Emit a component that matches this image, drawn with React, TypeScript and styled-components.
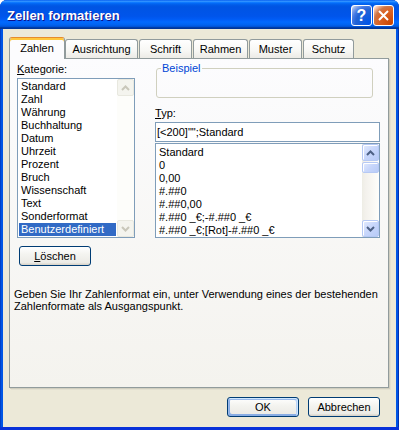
import React from "react";
import styled, { createGlobalStyle } from "styled-components";

const GlobalStyle = createGlobalStyle`
  html, body {
    margin: 0;
    padding: 0;
    background: #ffffff;
  }
  body {
    font-family: "Liberation Sans", Arial, sans-serif;
    font-size: 11px;
    color: #000000;
  }
  * {
    box-sizing: border-box;
  }
`;

const Window = styled.div`
  width: 399px;
  height: 430px;
  display: flex;
  flex-direction: column;
  background: #0055e5;
  border-radius: 7px 7px 0 0;
  overflow: hidden;
  box-shadow: inset 0 -3px #0831d9, inset 1px 0 #0040c8, inset -1px 0 #0030b0;
`;

const TitleBar = styled.div`
  height: 29px;
  flex: none;
  display: flex;
  align-items: flex-start;
  padding: 5px 5px 0 7px;
  background: linear-gradient(
    180deg,
    #0058ee 0%,
    #3593ff 4%,
    #288eff 6%,
    #127dff 8%,
    #036ffc 10%,
    #0262ee 14%,
    #0057e5 20%,
    #0054e3 24%,
    #0055eb 56%,
    #005bf5 66%,
    #026afe 76%,
    #0062ef 86%,
    #0052d6 92%,
    #0040ab 94%,
    #003092 100%
  );
`;

const Title = styled.div`
  flex: 1;
  color: #ffffff;
  font: bold 13px "Liberation Sans", Arial, sans-serif;
  letter-spacing: 0;
  line-height: 21px;
  text-shadow: 1px 1px #0f1089;
`;

const TitleButton = styled.div<{ $close?: boolean }>`
  width: 21px;
  height: 21px;
  margin-left: 1px;
  border: 1px solid #ffffff;
  border-radius: 3px;
  display: flex;
  align-items: center;
  justify-content: center;
  color: #ffffff;
  font: bold 16px "Liberation Sans", Arial, sans-serif;
  background: ${(p) =>
    p.$close
      ? "radial-gradient(circle at 90% 90%, #cc4600 0%, #dc6527 55%, #cd7546 70%, #ffccb2 90%, #ffffff 100%)"
      : "radial-gradient(circle at 90% 90%, #0054e9 0%, #2263d5 55%, #4479e4 70%, #a3bbec 90%, #ffffff 100%)"};
`;

const Body = styled.div`
  flex: 1;
  margin: 0 3px 3px;
  background: #ece9d8;
  display: flex;
  flex-direction: column;
  padding: 8px 7px 0 6px;
`;

const TabStrip = styled.div`
  height: 21px;
  flex: none;
  display: flex;
  align-items: flex-end;
  position: relative;
  z-index: 1;
`;

const Tab = styled.div<{ $active?: boolean; $w: number }>`
  width: ${(p) => p.$w}px;
  height: ${(p) => (p.$active ? 22 : 19)}px;
  margin-bottom: ${(p) => (p.$active ? -1 : 0)}px;
  margin-right: ${(p) => (p.$active ? 0 : 1)}px;
  padding-top: ${(p) => (p.$active ? 4 : 3)}px;
  border: 1px solid #919b9c;
  border-bottom: none;
  border-radius: 3px 3px 0 0;
  text-align: center;
  line-height: 13px;
  ${(p) =>
    p.$active
      ? `
    background: #fcfcfe;
    border-top-color: #e68b2c;
    box-shadow: inset 0 2px #ffc73c;
  `
      : `
    background: linear-gradient(180deg, #ffffff 0%, #f7f7f4 60%, #ecebe6 100%);
  `}
`;

const Panel = styled.div`
  height: 330px;
  flex: none;
  border: 1px solid #919b9c;
  background: linear-gradient(180deg, #fcfcfe 0%, #f4f3ee 100%);
  box-shadow: 1px 1px 0 #d0cebf, 2px 2px 0 #e3e0d0;
  padding: 4px 8px 0 7px;
  display: flex;
  flex-direction: column;
`;

const Columns = styled.div`
  display: flex;
  gap: 20px;
`;

const LeftCol = styled.div`
  width: 118px;
  display: flex;
  flex-direction: column;
`;

const RightCol = styled.div`
  width: 225px;
  display: flex;
  flex-direction: column;
`;

const Label = styled.div<{ $mt?: number }>`
  height: 13px;
  line-height: 13px;
  margin-top: ${(p) => p.$mt || 0}px;
  margin-bottom: 2px;
`;

const ListBox = styled.div<{ $h: number }>`
  height: ${(p) => p.$h}px;
  border: 1px solid #7f9db9;
  background: #ffffff;
  display: flex;
`;

const Items = styled.div<{ $pt: number }>`
  flex: 1;
  padding: ${(p) => p.$pt}px 1px 0 1px;
  overflow: hidden;
`;

const Item = styled.div<{ $selected?: boolean; $pl: number }>`
  height: 13px;
  line-height: 13px;
  padding-left: ${(p) => p.$pl}px;
  white-space: nowrap;
  background: ${(p) => (p.$selected ? "#316ac5" : "transparent")};
  color: ${(p) => (p.$selected ? "#ffffff" : "#000000")};
`;

const ScrollTrack = styled.div<{ $disabled?: boolean }>`
  width: 17px;
  display: flex;
  flex-direction: column;
  justify-content: space-between;
  background: ${(p) =>
    p.$disabled
      ? "#fdfdfa"
      : "linear-gradient(90deg, #eeede5 0%, #f3f1ec 20%, #fefefb 100%)"};
`;

const ScrollTop = styled.div`
  display: flex;
  flex-direction: column;
`;

const ScrollButton = styled.div<{ $disabled?: boolean; $h?: number }>`
  width: 17px;
  height: ${(p) => p.$h || 17}px;
  border-radius: 2px;
  display: flex;
  align-items: center;
  justify-content: center;
  ${(p) =>
    p.$disabled
      ? `
    background: #f4f4ee;
    border: 1px solid #e8e8df;
  `
      : `
    background: linear-gradient(135deg, #e3ebfd 0%, #c7d6fb 50%, #b8cbf7 100%);
    border: 1px solid #b6c9f4;
    box-shadow: inset 1px 1px #ffffff;
  `}
`;

const Thumb = styled(ScrollButton)`
  margin-top: 1px;
`;

const PushButton = styled.div<{ $default?: boolean; $ml?: number }>`
  width: 72px;
  height: 20px;
  margin-left: ${(p) => p.$ml || 0}px;
  border: 1px solid #003c74;
  border-radius: 3px;
  display: flex;
  align-items: center;
  justify-content: center;
  background: linear-gradient(180deg, #ffffff 0%, #f4f4f0 40%, #ecebe6 86%, #d6d0c5 100%);
  box-shadow: ${(p) =>
    p.$default
      ? "inset -1px 1px #cee7ff, inset 1px 2px #98b8ea, inset -2px 2px #bcd4f6, inset 1px -1px #89ade4, inset 2px -2px #89ade4"
      : "none"};
`;

const GroupBox = styled.fieldset`
  height: 36px;
  margin: -1px 7px 0 1px;
  padding: 0;
  border: 1px solid #d0d0bf;
  border-radius: 3px;
  min-width: 0;
`;

const Legend = styled.legend`
  color: #0046d5;
  padding: 0 1px;
  margin-left: 4px;
  line-height: 13px;
`;

const TextInput = styled.div`
  height: 20px;
  border: 1px solid #7f9db9;
  background: #ffffff;
  display: flex;
  align-items: center;
  padding-left: 1px;
  margin-bottom: 1px;
  white-space: nowrap;
`;

const Description = styled.div`
  margin: 22px 0 0 -3px;
  line-height: 12px;
`;

const Footer = styled.div`
  display: flex;
  justify-content: flex-end;
  gap: 9px;
  margin-top: 9px;
  padding-right: 9px;
`;

const Arrow = ({ dir, color }: { dir: "up" | "down"; color: string }) => (
  <svg width="9" height="6" viewBox="0 0 9 6">
    <path
      d={dir === "up" ? "M1 5 L4.5 1.5 L8 5" : "M1 1 L4.5 4.5 L8 1"}
      fill="none"
      stroke={color}
      strokeWidth="2"
    />
  </svg>
);

const categories = [
  "Standard",
  "Zahl",
  "Währung",
  "Buchhaltung",
  "Datum",
  "Uhrzeit",
  "Prozent",
  "Bruch",
  "Wissenschaft",
  "Text",
  "Sonderformat",
  "Benutzerdefiniert",
];

const formats = [
  "Standard",
  "0",
  "0,00",
  "#.##0",
  "#.##0,00",
  "#.##0 _€;-#.##0 _€",
  "#.##0 _€;[Rot]-#.##0 _€",
];

const tabs = [
  { name: "Zahlen", w: 56 },
  { name: "Ausrichtung", w: 73 },
  { name: "Schrift", w: 53 },
  { name: "Rahmen", w: 55 },
  { name: "Muster", w: 53 },
  { name: "Schutz", w: 51 },
];

export default function App() {
  return (
    <>
      <GlobalStyle />
      <Window>
        <TitleBar>
          <Title>Zellen formatieren</Title>
          <TitleButton>?</TitleButton>
          <TitleButton $close>
            <svg width="11" height="11" viewBox="0 0 11 11">
              <path d="M1 1 L10 10 M10 1 L1 10" stroke="#ffffff" strokeWidth="2" />
            </svg>
          </TitleButton>
        </TitleBar>
        <Body>
          <TabStrip>
            {tabs.map((t, i) => (
              <Tab key={t.name} $w={t.w} $active={i === 0}>
                {t.name}
              </Tab>
            ))}
          </TabStrip>
          <Panel>
            <Columns>
              <LeftCol>
                <Label>
                  <u>K</u>ategorie:
                </Label>
                <ListBox $h={160}>
                  <Items $pt={1}>
                    {categories.map((c, i) => (
                      <Item key={c} $pl={2} $selected={i === categories.length - 1}>
                        {c}
                      </Item>
                    ))}
                  </Items>
                  <ScrollTrack $disabled>
                    <ScrollButton $disabled>
                      <Arrow dir="up" color="#c9c7ba" />
                    </ScrollButton>
                    <ScrollButton $disabled>
                      <Arrow dir="down" color="#c9c7ba" />
                    </ScrollButton>
                  </ScrollTrack>
                </ListBox>
                <PushButton style={{ marginTop: 8 }} $ml={2}>
                  <span>
                    <u>L</u>öschen
                  </span>
                </PushButton>
              </LeftCol>
              <RightCol>
                <GroupBox>
                  <Legend>Beispiel</Legend>
                </GroupBox>
                <Label $mt={9}>
                  <u>T</u>yp:
                </Label>
                <TextInput>[&lt;200]"";Standard</TextInput>
                <ListBox $h={95}>
                  <Items $pt={2}>
                    {formats.map((f) => (
                      <Item key={f} $pl={2}>
                        {f}
                      </Item>
                    ))}
                  </Items>
                  <ScrollTrack>
                    <ScrollTop>
                      <ScrollButton>
                        <Arrow dir="up" color="#4d6185" />
                      </ScrollButton>
                      <Thumb $h={11} />
                    </ScrollTop>
                    <ScrollButton>
                      <Arrow dir="down" color="#4d6185" />
                    </ScrollButton>
                  </ScrollTrack>
                </ListBox>
              </RightCol>
            </Columns>
            <Description>
              Geben Sie Ihr Zahlenformat ein, unter Verwendung eines der bestehenden
              <br />
              Zahlenformate als Ausgangspunkt.
            </Description>
          </Panel>
          <Footer>
            <PushButton $default>OK</PushButton>
            <PushButton>Abbrechen</PushButton>
          </Footer>
        </Body>
      </Window>
    </>
  );
}
